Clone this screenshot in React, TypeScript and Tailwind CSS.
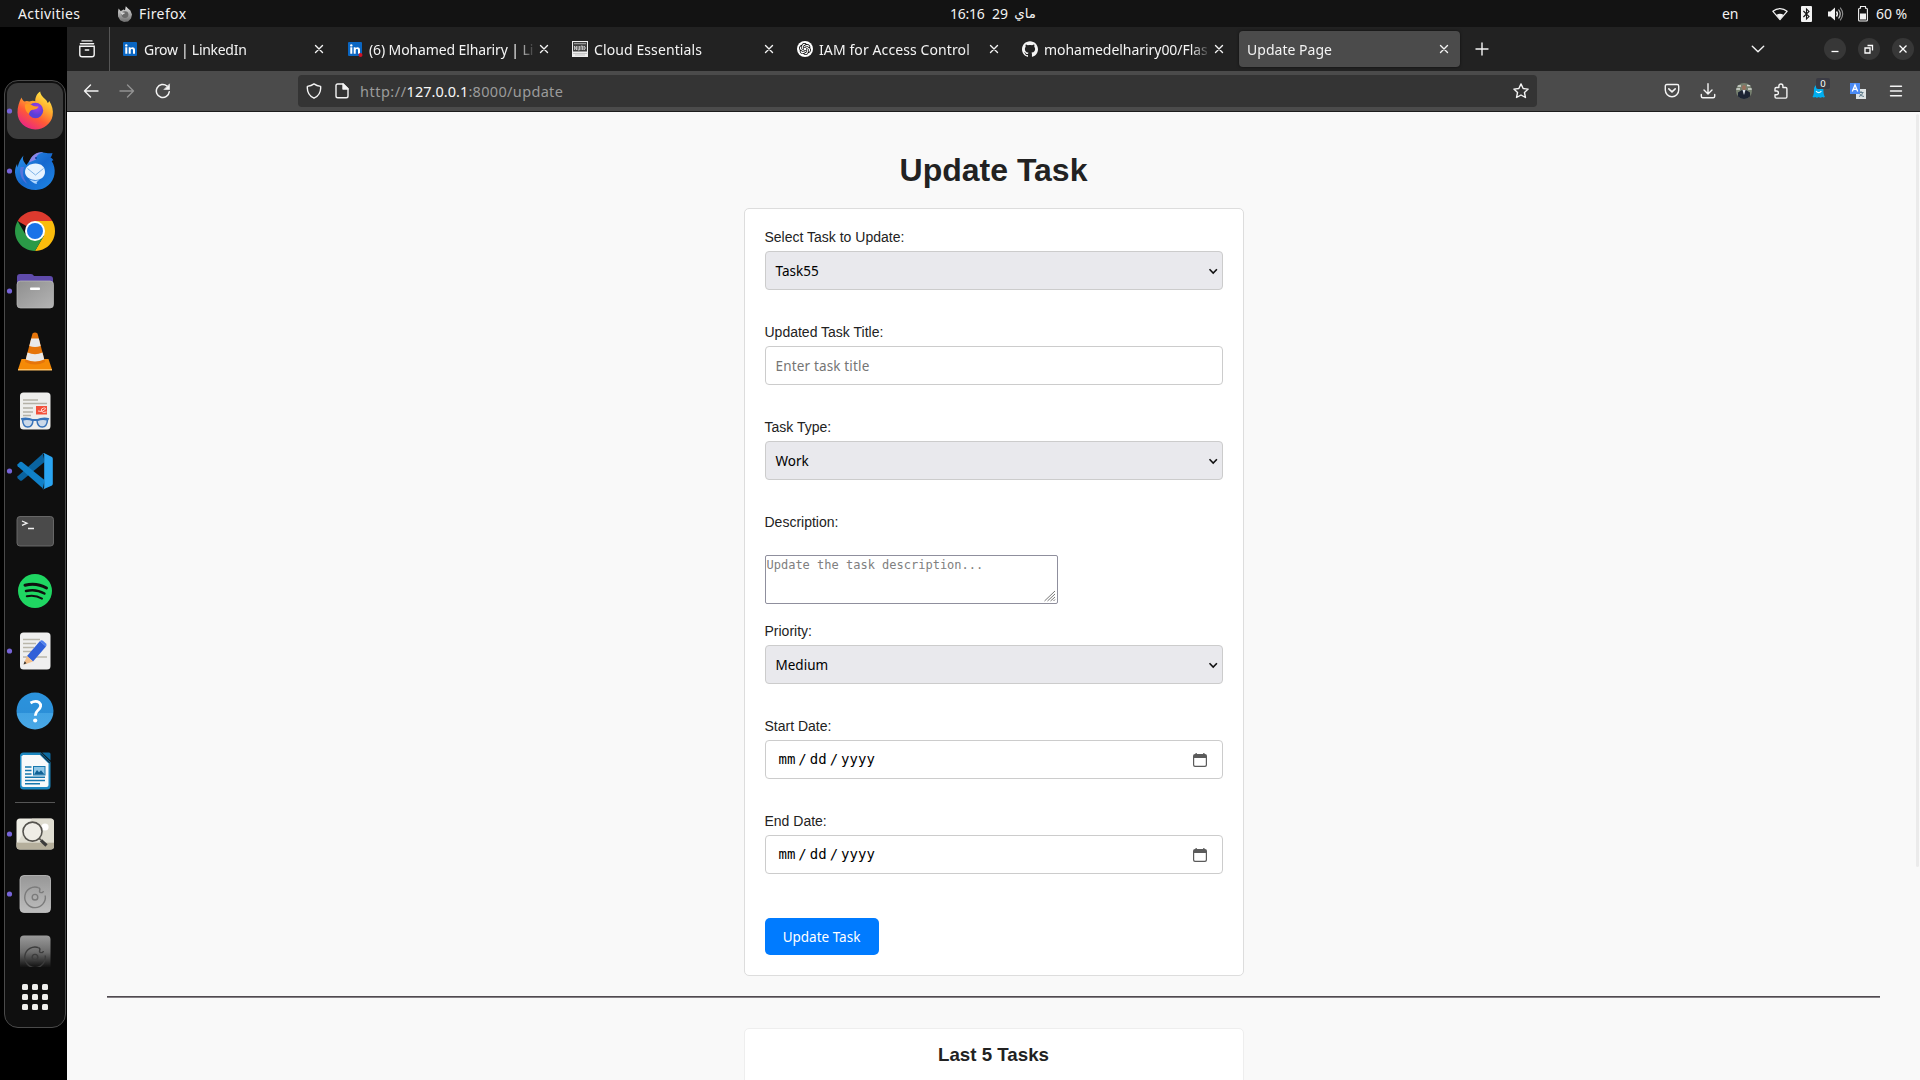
import type { ReactNode } from "react";
import { SiGithub, SiOpenai } from "react-icons/si";

type SvgProps = { children: ReactNode; size?: number; className?: string };

function Line({ children, size = 16, className = "" }: SvgProps) {
  return (
    <svg
      width={size}
      height={size}
      viewBox={`0 0 ${size} ${size}`}
      fill="none"
      stroke="currentColor"
      strokeWidth="1.4"
      strokeLinecap="round"
      strokeLinejoin="round"
      className={`shrink-0 ${className}`}
    >
      {children}
    </svg>
  );
}

/* ---------- System bar ---------- */

function TopBar() {
  return (
    <header className="flex h-[27px] shrink-0 items-center bg-[#131313] text-[14px] leading-[27px] text-[#f2f2f2]">
      <span className="ml-[18px] w-[99px] tracking-[0.41px]">Activities</span>
      <svg width="16" height="18" viewBox="0 0 16 18" className="shrink-0">
        <defs>
          <linearGradient id="mono" x1="0" y1="0" x2="0" y2="1">
            <stop offset="0" stopColor="#e2e2e2" />
            <stop offset="1" stopColor="#6d6d6d" />
          </linearGradient>
        </defs>
        <path d="M1.6 3.6 3.6 6 5 5.6 6.4 4.6 8 5.2 8.8 1.2 11 3.6 13.4 5.4 15 9.4 14 13.6 11 16.4 7 17 3.2 15.2 1 11.6 1 7Z" fill="url(#mono)" />
        <circle cx="8" cy="9.6" r="3.4" fill="#6a6a6a" />
        <path d="M3.4 7.6c2-.8 3 .2 4.6.1-.6 1.6-2.4 1.2-2.4 2.6z" fill="#d5d5d5" />
      </svg>
      <span className="ml-[6px] w-[811px] tracking-[0.4px]">Firefox</span>
      <span className="w-[42px] pb-px tracking-[-0.25px]">16:16</span>
      <span className="w-[22px] pb-px">29</span>
      <span dir="rtl" className="w-[22px] whitespace-nowrap pb-px text-[13.4px]">ماي</span>
      <span className="ml-[686px] w-[50px] tracking-[-0.2px]">en</span>
      <svg width="16" height="14" viewBox="0 0 16 14" className="shrink-0">
        <path d="M.9 4.3C5 .6 11 .6 15.1 4.3L8 12.6Z" fill="none" stroke="#f2f2f2" strokeWidth="1.2" strokeLinejoin="round" />
        <path d="M4.5 7.8Q8 5.6 11.5 7.8L8 12.4Z" fill="#f2f2f2" />
      </svg>
      <svg width="11" height="16" viewBox="0 0 11 16" className="ml-[13px] shrink-0">
        <rect width="11" height="16" rx="1" fill="#f2f2f2" />
        <path d="M2.4 5 8 10.6 5.5 13V3L8 5.4 2.4 11" fill="none" stroke="#131313" strokeWidth="1.1" />
      </svg>
      <svg width="16" height="16" viewBox="0 0 16 16" className="ml-[16px] shrink-0" fill="none" stroke="#f2f2f2">
        <path d="M0 5.5h2.5L7 1.5v13L2.5 10.5H0Z" fill="#f2f2f2" stroke="none" />
        <path d="M8.5 5.5q1.8 2.500 0 5" strokeWidth="1.4" />
        <path d="M10.5 3.5q3.4 4.500 0 9" strokeWidth="1.2" opacity=".8" />
        <path d="M12.2 1.700q5 6.300 0 12.600" strokeWidth="1.100" opacity=".55" />
      </svg>
      <svg width="10" height="16" viewBox="0 0 10 16" className="ml-[14px] shrink-0">
        <path d="M2.5.5h5v1.800h.9q1 0 1 1v10.700q0 1-1 1H1.600q-1 0-1-1V3.300q0-1 1-1h.9z" fill="none" stroke="#f2f2f2" strokeWidth="1.1" />
        <rect x="2" y="7.5" width="6" height="6" fill="#f2f2f2" />
      </svg>
      <span className="ml-[8px] whitespace-nowrap tracking-[-0.07px]">60 %</span>
    </header>
  );
}

/* ---------- Dock ---------- */

function DockItem({ children, running = false }: { children: ReactNode; running?: boolean }) {
  return (
    <svg width="60" height="60" viewBox="0 0 60 60" className="block shrink-0">
      {children}
      {running && <circle cx="4.5" cy="30" r="2.6" fill="#7764d8" />}
    </svg>
  );
}

function Drive({ faded = false }: { faded?: boolean }) {
  return (
    <>
      <defs>
        <linearGradient id={faded ? "driveFade" : "driveFull"} x1="0" y1="0" x2="0" y2="1">
          <stop offset="0" stopColor={faded ? "#9a9a9a" : "#979797"} />
          <stop offset={faded ? "0.45" : "1"} stopColor={faded ? "#6c6c6c" : "#bdbdbd"} />
          {faded && <stop offset="0.83" stopColor="#161616" />}
          {faded && <stop offset="1" stopColor="#0f0f0f" />}
        </linearGradient>
      </defs>
      <rect x="15" y="11.5" width="30.5" height="37" rx="4" fill={faded ? "url(#driveFade)" : "url(#driveFull)"} stroke={faded ? "none" : "#c4c4c4"} strokeWidth=".8" />
      <g fill="none" stroke={faded ? "#3c3c3c" : "#7b7b7b"} strokeWidth="1.4">
        <path d="M33.500 23.600A10.300 10.300 0 1 0 40.200 31.500" />
        <path d="M33.500 23.600q2 1 1.200 2.800t1.300 2.200 2.400-1.600" />
        <circle cx="30" cy="33.2" r="2.800" />
      </g>
    </>
  );
}

function Dock() {
  return (
    <aside className="flex w-[67px] shrink-0 flex-col bg-black pl-1 pt-[53px]">
      <div className="flex h-[948px] w-[62px] flex-col rounded-[14px] border border-[#4a4a4a] bg-[#0f0f0f]">
        {/* Firefox */}
        <DockItem running>
          <defs>
            <linearGradient id="ffFlame" x1=".85" y1="0" x2=".25" y2="1">
              <stop offset="0" stopColor="#fff44f" />
              <stop offset=".35" stopColor="#ffb02e" />
              <stop offset=".65" stopColor="#ff5a36" />
              <stop offset="1" stopColor="#e8218a" />
            </linearGradient>
            <radialGradient id="ffGlobe" cx=".6" cy=".3">
              <stop offset="0" stopColor="#a63be8" />
              <stop offset="1" stopColor="#5a3fd8" />
            </radialGradient>
          </defs>
          <rect x="2" y="2" width="56" height="56" rx="11" fill="#3b3b3b" />
          <path d="M16.5 16.5c.5 2 1.500 3 2.800 3.900 1.700-.7 3.400-.7 5 0 2.500-1 4.500-.9 6-.2-.2-3.800 1.800-7.700 4.900-9.600.5 4 2.700 5.400 5.300 7.800 1.200 1 1.800 2.300 2.300 3.600.8-.4 1.200-1.200 1.300-2.200 3 4.500 4.500 9.800 3.500 15-1.500 8-8.800 13.700-17.400 13.700-9.700 0-17.700-7.300-17.700-16.900 0-5.800 1.700-11 4-15.100z" fill="url(#ffFlame)" />
          <circle cx="30.5" cy="29.5" r="7.700" fill="url(#ffGlobe)" />
          <path d="M20 23.500c3-1.800 6-.3 8 1.300 2 1 4 .5 5.500.7-1 2.700-3.500 3-6 3.300-2 .3-3.200 2-3.500 4.200-2.500-1.500-4.600-5.500-4-9.500z" fill="#ff9a22" />
        </DockItem>
        {/* Thunderbird */}
        <DockItem running>
          <defs>
            <linearGradient id="tbBody" x1="0" y1="0" x2="1" y2="1">
              <stop offset="0" stopColor="#2d95ee" />
              <stop offset=".5" stopColor="#1669cf" />
              <stop offset="1" stopColor="#1d86e4" />
            </linearGradient>
          </defs>
          <path d="M18.5 14.5c-1.500 4 .5 6.500 3 9.500L25 19c3.500-6 8.500-8 13-7.600 3 .2 5.500 1.400 9.500.6-.5 2.500-1 3.500-2 4.500 1.500.6 2.200 1.500 3 2.800-.7.2-1.200.5-1.800.8 2.500 4 3.500 8 2.800 13C48.200 42 40.500 49 31 49 19 49 10.500 41.500 10 31.500c-.1-3 .7-6 2-8.500l.6 3.500c1-5 3.200-9 5.900-12z" fill="url(#tbBody)" />
          <path d="M24 21.500c2.500-7.500 8-10.500 14-10.100-5 1.200-7 3.500-7 7z" fill="#8c85e6" />
          <path d="M15.500 26c-1.500 8 2 14 7 17-3.500-5-6-9.500-3.500-17z" fill="#6d73dd" opacity=".7" />
          <path d="M20 31c0-5 4.500-8.500 10.500-8.500S40 26 40 31s-4.500 8-9.500 8S20 36 20 31z" fill="#e6f3ff" />
          <path d="M24 38c3 2 7 2 10 1-2 2-3 2.300-2 4-3-.4-6-2.400-8-5z" fill="#afd7ff" />
          <path d="m22.500 27.500 8 6.500 8-6.500" fill="none" stroke="#7fb4e8" strokeWidth="1" />
          <circle cx="31" cy="17" r="1" fill="#0b3f9a" />
        </DockItem>
        {/* Chrome */}
        <DockItem>
          <path d="M30 30 12.680 20A20 20 0 0 1 47.320 20Z" fill="#dd3a2e" />
          <path d="M30 20h17.320A20 20 0 0 1 30 50L38.660 35Z" fill="#fbbc0c" />
          <path d="M12.680 20A20 20 0 0 0 30 50L38.660 35 21.340 35Z" fill="#2a9a47" />
          <circle cx="30" cy="30" r="10" fill="#fff" />
          <circle cx="30" cy="30" r="8" fill="#1a73e8" />
        </DockItem>
        {/* Files */}
        <DockItem running>
          <defs>
            <linearGradient id="folder" x1="0" y1="0" x2="1" y2="1">
              <stop offset="0" stopColor="#8f8f8f" />
              <stop offset="1" stopColor="#b4b4b4" />
            </linearGradient>
          </defs>
          <path d="M12 16q0-3 3-3h11q2 0 3 2h16q3 0 3 3v10H12z" fill="#5f4bab" />
          <rect x="12" y="20" width="36.5" height="27" rx="3.5" fill="url(#folder)" stroke="#bdbdbd" strokeWidth=".7" />
          <rect x="25" y="26.5" width="10" height="2.600" rx=".8" fill="#fff" />
        </DockItem>
        {/* VLC */}
        <DockItem>
          <path d="m16.500 38-3.500 10.500h34L43.500 38z" fill="#f58a07" />
          <path d="M13 48h34v1.500H13z" fill="#ffc061" />
          <path d="M27.500 12.500q2.500-1.800 5 0L40 41q-10 5-20 0z" fill="#e6750a" />
          <path d="M26.200 17.500h7.600L35.700 25q-5.700 2.200-11.400 0z" fill="#e9e9e9" />
          <path d="M22.500 31.500q7.500 3.300 15 0l1.700 7q-9.200 4-18.400 0z" fill="#e9e9e9" />
        </DockItem>
        {/* Document viewer */}
        <DockItem>
          <rect x="15" y="11.5" width="30.5" height="37" rx="3.5" fill="#eeeeec" />
          <path d="M18 19h15M18 22.500h24M18 27h10M18 31h10M18 34.500h8" stroke="#b4b1a6" strokeWidth="1.500" />
          <rect x="31" y="25" width="11" height="8.500" fill="#f2503b" />
          <path d="M33 30q4 1.500 6.500-1t-1-2q-3 .5-2 3t5 1" fill="none" stroke="#ffd4cd" strokeWidth="1" />
          <path d="M16 38q6-1.500 12 1h4q6-2.500 12-1" fill="none" stroke="#3672b9" strokeWidth="1.800" />
          <g fill="#cbd9e9" stroke="#3672b9" strokeWidth="1.500">
            <path d="M17.500 39q5-1.500 10.500 0.500-.5 6.500-5.200 6.500t-5.300-7z" />
            <path d="M42.500 39q-5-1.500-10.500 0.500.5 6.500 5.200 6.500t5.300-7z" />
          </g>
        </DockItem>
        {/* Visual Studio Code */}
        <DockItem running>
          <path d="m38 12.500 1.500 8.500L17 39.500q-1 .6-2 0L12.700 37.300q-.9-1 0-2z" fill="#0a639f" />
          <path d="m38 47.500 1.500-8.500L17 21q-1-.6-2 0l-2.300 2.200q-.9 1 0 2z" fill="#1081c9" />
          <path d="M37 12.500q.8-.9 2-.4l7.500 3.700q1.300.7 1.300 2v25q0 1.300-1.300 2L39 48q-1.200.5-2-.4 2.200 1.100 2.200-1.600V14q0-2.500-2.200-1.500z" fill="#2aa5f2" />
        </DockItem>
        {/* Terminal */}
        <DockItem>
          <rect x="12" y="15.5" width="36.5" height="29.5" rx="3" fill="#4a4a4a" stroke="#6e6e6e" strokeWidth=".9" />
          <path d="m17 20 5 2.200-5 2.200M23 27.500h6" fill="none" stroke="#f2f2f2" strokeWidth="1.300" />
        </DockItem>
        {/* Spotify */}
        <DockItem>
          <circle cx="30" cy="30" r="17" fill="#1fd662" />
          <g fill="none" stroke="#0f0f0f" strokeLinecap="round">
            <path d="M20 24.200q11.500-3 21.500 2.800" strokeWidth="3" />
            <path d="M21 30q9.800-2.500 18.400 2.500" strokeWidth="2.500" />
            <path d="M21.800 35.300q8.200-1.800 15.200 2.300" strokeWidth="2" />
          </g>
        </DockItem>
        {/* Text editor */}
        <DockItem running>
          <rect x="15" y="11.5" width="30.5" height="37" rx="3.5" fill="#efefef" />
          <path d="M18 18.500h17M18 22.500h13M18 26.500h11M18 30.500h9M18 36h24" stroke="#b9b6aa" strokeWidth="1.400" />
          <path d="m35 20 6 5.500L28 40.500 22 35z" fill="#3060d8" />
          <path d="M35 20q1.500-1.500 3-.2l3 2.700q1.300 1.400 0 3z" fill="#4f80ef" />
          <path d="m22 35 6 5.500-8.500 3q-1-.5-.5-1.500z" fill="#f3c08c" />
          <path d="m19.700 40.200 1.800 2.100-3 1.200z" fill="#333" />
        </DockItem>
        {/* Help */}
        <DockItem>
          <defs>
            <linearGradient id="help" x1="0" y1="0" x2="0" y2="1">
              <stop offset="0" stopColor="#2b93dd" />
              <stop offset=".54" stopColor="#2b8fd8" />
              <stop offset=".56" stopColor="#42a3e4" />
              <stop offset="1" stopColor="#49a8e6" />
            </linearGradient>
          </defs>
          <circle cx="30" cy="30" r="18.500" fill="url(#help)" />
          <path d="M25.500 22q5-3 8.500-.6c3 2.500 1.500 5.600-.5 7.400-2 1.800-3.200 2.500-3.200 6" fill="none" stroke="#fff" strokeWidth="2.800" />
          <circle cx="30.2" cy="39.5" r="2.100" fill="#fff" />
        </DockItem>
        {/* Writer */}
        <DockItem>
          <path d="M18.500 11.500H36l9.500 9.500v24q0 3.500-3.500 3.500H18.500q-3.500 0-3.500-3.500V15q0-3.500 3.500-3.500z" fill="#1c87c0" />
          <path d="M18 14h17l8.500 8.500V44q0 2-2 2H18.500q-2 0-2-2V15.500z" fill="#f7f9fa" />
          <path d="M37 11.500h7q1.500 0 1.500 1.500v6.500z" fill="#0f6da3" />
          <path d="M35.500 12.500 45 22" stroke="#0b3954" strokeWidth="1.500" />
          <path d="M20 26h6.500M20 29.500h6.500M20 33h6.500M20 36.300h20M20 39.500h20M20 42.700h15" stroke="#1678ae" strokeWidth="1.500" />
          <rect x="28.5" y="25.5" width="11.5" height="8.500" fill="#8fc6e6" stroke="#1678ae" />
          <path d="m29 33.500 3-4.500 2 2.200 2-2 3.500 4.300z" fill="#0f6194" />
        </DockItem>
        <div className="mx-[10px] my-px h-px bg-[#555]" />
        {/* Image viewer */}
        <DockItem running>
          <rect x="11.5" y="14.5" width="37.5" height="31" rx="3.5" fill="#efeee6" />
          <path d="M27 14.500h18.500q3.500 0 3.500 3.500V38H13z" fill="#d8d5c8" opacity=".7" />
          <path d="M11.500 38.500H49V42q0 3.500-3.500 3.500H15q-3.500 0-3.500-3.500z" fill="#b5af9c" />
          <circle cx="40" cy="23" r="3.600" fill="#fff" />
          <circle cx="27.5" cy="27.6" r="9.500" fill="#f5f4ef" fillOpacity=".7" stroke="#55534e" strokeWidth="1.600" />
          <path d="m34.300 34.500 1.800 1.700" stroke="#55534e" strokeWidth="1.600" />
          <path d="m36 36.300 5.500 5.200" stroke="#3b3b3b" strokeWidth="3.200" />
        </DockItem>
        {/* Mounted drives */}
        <DockItem running>
          <Drive />
        </DockItem>
        <div className="h-[43px] shrink-0 overflow-hidden">
          <DockItem>
            <Drive faded />
          </DockItem>
        </div>
        {/* Application launcher */}
        <div className="mx-auto mt-[17px] grid grid-cols-3 gap-[4.5px]">
          {Array.from({ length: 9 }, (_, i) => (
            <span key={i} className="size-[5.5px] rounded-[1.5px] bg-[#eeeeec]" />
          ))}
        </div>
      </div>
    </aside>
  );
}

/* ---------- Browser chrome ---------- */

function LinkedIn({ alert = false }: { alert?: boolean }) {
  return (
    <svg width="16" height="16" viewBox="0 0 16 16" className="shrink-0">
      <rect x="1" y="1" width="14" height="14" rx="1" fill="#0a66c2" />
      <circle cx="4.3" cy="4.4" r="1.200" fill="#fff" />
      <path d="M3.300 6.300h2v6.400h-2zM6.700 6.300h1.900v.9c1-1.600 4.400-1.400 4.400 1.600v3.900h-2V9.300c0-2-2.300-1.700-2.300 0v3.400h-2z" fill="#fff" />
      {alert && <circle cx="13.500" cy="14" r="2" fill="#d11124" />}
    </svg>
  );
}

function AmiFavicon() {
  return (
    <svg width="16" height="16" viewBox="0 0 16 16" className="shrink-0">
      <rect width="16" height="16" fill="#eee" />
      <rect x="1" y="1" width="14" height="9.500" fill="#3d3d3d" />
      <path d="M2 2.700h12" stroke="#aaa" />
      <path d="M2.500 9V5l2 4V5M6 5v4h1.500V5M9 9V5h1.500v4M12 5v4l1.500-2L12 5" stroke="#d5d5d5" strokeWidth=".8" fill="none" />
      <path d="M1 12.500h14M3 14h10" stroke="#bdbdbd" strokeWidth=".8" />
    </svg>
  );
}

function ChatFavicon() {
  return (
    <span className="flex size-4 shrink-0 items-center justify-center rounded-full bg-white text-black">
      <SiOpenai size={12} />
    </span>
  );
}

type TabProps = { title: string; icon?: ReactNode; active?: boolean; tracking: string };

function Tab({ title, icon, active, tracking }: TabProps) {
  return (
    <div className="h-full w-[225px] shrink-0 px-[2px] py-1">
      <div className={`flex h-full items-center rounded-[4px] px-2 ${active ? "bg-[#4b4b4b] shadow-[0_0_3px_rgba(0,0,0,0.6)]" : ""}`}>
        {icon}
        <span
          className={`flex-1 overflow-hidden whitespace-nowrap [mask-image:linear-gradient(to_right,#000_calc(100%-20px),transparent)] ${icon ? "pl-[6px]" : ""} ${tracking}`}
        >
          {title}
        </span>
        <Line>
          <path d="m4.500 4.500 7 7m0-7-7 7" />
        </Line>
      </div>
    </div>
  );
}

function TabStrip() {
  return (
    <div className="flex h-11 shrink-0 items-center bg-[#222222] text-[14px] text-[#f4f4f4]">
      <div className="mr-[2px] flex h-full w-[43px] shrink-0 items-center border-r border-[#555] pl-[12px]">
        <svg width="16" height="18" viewBox="0 0 16 18" fill="none" stroke="#f4f4f4" strokeWidth="1.4" strokeLinecap="round">
          <path d="M3 .9h10M1.400 3.700h13.200" />
          <path d="M.8 6.300h14.400v8.200q0 2.300-2.300 2.300H3.100q-2.300 0-2.300-2.300z" />
          <path d="M6.300 10h3.400" />
        </svg>
      </div>
      <Tab icon={<LinkedIn />} title="Grow | LinkedIn" tracking="tracking-[-0.29px]" />
      <Tab icon={<LinkedIn alert />} title="(6) Mohamed Elhariry | Li" tracking="tracking-[-0.12px]" />
      <Tab icon={<AmiFavicon />} title="Cloud Essentials" tracking="tracking-[0.1px]" />
      <Tab icon={<ChatFavicon />} title="IAM for Access Control" tracking="tracking-[0.1px]" />
      <Tab icon={<SiGithub size={16} className="shrink-0" />} title="mohamedelhariry00/Flas" tracking="tracking-[-0.04px]" />
      <Tab active title="Update Page" tracking="tracking-[0.02px]" />
      <Line className="ml-[12px]">
        <path d="M8 2v12M2 8h12" />
      </Line>
      <Line className="ml-[260px]">
        <path d="m2.300 5.300 5.700 5.400 5.700-5.400" />
      </Line>
      <div className="ml-[58px] flex gap-3">
        {["M5 11h7", "M4.500 7.500h5v5h-5zM7 5h5v5", "m5 5 7 7m0-7-7 7"].map((d) => (
          <span key={d} className="flex size-[22px] items-center justify-center rounded-full bg-[#373737]">
            <svg width="16" height="16" viewBox="0.5 0.5 16 16" fill="none" stroke="#fff" strokeWidth="1.3">
              <path d={d} />
            </svg>
          </span>
        ))}
      </div>
    </div>
  );
}

function Toolbar() {
  return (
    <div className="flex h-[41px] shrink-0 items-center border-b border-[#1c1c1c] bg-[#4b4b4b] pl-[6px] text-[#f4f4f4]">
      <div className="flex w-9 justify-center">
        <Line>
          <path d="M15 8H1.500m6-6-6 6 6 6" />
        </Line>
      </div>
      <div className="flex w-9 justify-center text-[#929292]">
        <Line>
          <path d="M1 8h13.500m-6-6 6 6-6 6" />
        </Line>
      </div>
      <div className="flex w-9 justify-center">
        <Line>
          <path d="M14.300 8.700A6.500 6.500 0 1 1 12 3" strokeWidth="1.500" />
          <path d="M14.500 1.200v5.300H9.200z" fill="currentColor" strokeWidth=".6" />
        </Line>
      </div>
      <div className="ml-[117px] flex h-8 w-[1239px] shrink-0 items-center rounded-[4px] bg-[#343434] pl-2">
        <Line>
          <path d="M8 .9c2 1.600 4.200 2.300 6.600 2.500.5 5-1.800 9.600-6.600 11.800C3.200 13 .9 8.400 1.400 3.400 3.800 3.200 6 2.500 8 .9z" />
        </Line>
        <Line className="ml-3">
          <path d="M3.600 1h5.600L14 5.800V13q0 1.800-1.800 1.800H3.800Q2 14.800 2 13V2.600Q2 1 3.600 1z" />
          <path d="M9 1v5h5z" fill="currentColor" />
        </Line>
        <span className="ml-[10px] flex-1 whitespace-nowrap pt-[2px] text-[14.5px] text-[#9b9b9b]">
          <span className="tracking-[0.5px]">http://</span>
          <span className="tracking-[0.05px] text-[#f8f8f8]">127.0.0.1</span>
          <span className="tracking-[0.33px]">:8000/update</span>
        </span>
        <Line className="mr-2">
          <path d="m8 .9 2.150 4.600 5 .6-3.700 3.400 1 5L8 12l-4.450 2.500 1-5L.85 6.100l5-.6z" />
        </Line>
      </div>
      <div className="ml-[117px] flex w-9 justify-center">
        <Line>
          <path d="M2.800 1.500h10.400q1.500 0 1.500 1.500v4a6.700 6.700 0 0 1-13.400 0V3q0-1.500 1.500-1.500z" />
          <path d="m4.800 5.800 3.200 3 3.200-3" strokeWidth="1.600" />
        </Line>
      </div>
      <div className="flex w-9 justify-center">
        <Line>
          <path d="M8 .8v10M4 7l4 4 4-4M1.300 11.500v1.700q0 1.500 1.500 1.500h10.400q1.500 0 1.500-1.500v-1.700" />
        </Line>
      </div>
      <div className="flex w-9 justify-center">
        <svg width="16" height="16" viewBox="0 0 16 16" className="rounded-full">
          <rect width="16" height="16" fill="#76806f" />
          <path d="M0 3h5M11 2.500h5M0 6h4M12 6h4" stroke="#d7dcd8" strokeWidth="1.600" />
          <path d="M2 16V9.500L6 7h4l4 2.500V16z" fill="#1d2433" />
          <path d="m6.500 7 1.500 5 1.500-5z" fill="#dfe5ec" />
          <ellipse cx="8" cy="4.5" rx="2" ry="2.600" fill="#9a6f5c" />
        </svg>
      </div>
      <div className="flex w-[37px] justify-center">
        <Line>
          <path d="M2 8V5.800q0-1.300 1.300-1.300h2.600V3a2 2 0 0 1 4 0v1.500h2.700q1.300 0 1.300 1.300v8q0 1.300-1.300 1.300H3.300q-1.300 0-1.300-1.300v-2h1.500a1.900 1.900 0 0 0 0-3.800z" />
        </Line>
      </div>
      <div className="relative flex w-[39px] justify-center">
        <svg width="16" height="16" viewBox="0 0 16 16">
          <path d="M3 6a4.700 4.700 0 0 1 9.400 0c0 4 .3 6 1.600 8-1 .5-1.800.7-2.800 0-1.200.9-2.300.9-3.500 0-1.200.9-2.300.9-3.500 0-1 .7-1.600.5-2.700 0C2.700 12 3 10 3 6z" fill="#00aef0" />
          <path d="M5 8.200q2.700 3 5.400 0" fill="none" stroke="#e5f8ff" strokeWidth="1.200" />
        </svg>
        <span className="absolute left-[17px] top-[-5px] h-[11px] w-[14px] rounded-[2px] bg-[#3b3b44] text-center text-[9.5px] leading-[11px] text-white">0</span>
      </div>
      <div className="flex w-[39px] justify-center">
        <svg width="16" height="16" viewBox="0 0 16 16" className="overflow-visible">
          <rect x="6" y="6" width="10" height="10" fill="#dde2e4" />
          <path d="M8.500 9.500h5M11 8v1.500M9 13.500q3.500-1 3.700-4M9.500 10.500q1.500 3 4.500 3" stroke="#607d8b" fill="none" />
          <rect width="10" height="11" fill="#4a8af4" />
          <path d="M2.300 8.500 5 2l2.700 6.500M3.200 6.300h3.600" stroke="#fff" strokeWidth="1.300" fill="none" />
        </svg>
      </div>
      <div className="flex w-[38px] justify-center">
        <Line>
          <path d="M2.500 3.300h11M2.500 8h11M2.500 12.700h11" />
        </Line>
      </div>
    </div>
  );
}

/* ---------- Page ---------- */

function Field({ label, children }: { label: string; children: ReactNode }) {
  return (
    <div className="mb-[34px]">
      <div className="mb-[6px] text-sm leading-4">{label}</div>
      {children}
    </div>
  );
}

function Select({ value }: { value: string }) {
  return (
    <div className="flex h-[39px] items-center justify-between rounded-[4px] border border-[#ccc] bg-[#e9e9ed] pl-[10px] pr-[4px] pt-px font-['Noto_Sans',sans-serif] text-[13.5px] text-black">
      {value}
      <svg width="10" height="7" viewBox="0 0 10 7" fill="none" stroke="#111" strokeWidth="1.6">
        <path d="M1.500 1.200 5.200 5 8.900 1.200" />
      </svg>
    </div>
  );
}

function DateInput() {
  return (
    <div className="flex h-[39px] items-center rounded-[4px] border border-[#ccc] bg-white pl-[13px] pr-[15px] font-['DejaVu_Sans_Mono',monospace] text-sm text-black">
      <span className="flex-1 whitespace-nowrap pb-px">
        mm<span className="mx-[3px]">/</span>dd<span className="mx-[3px]">/</span>yyyy
      </span>
      <svg width="14" height="14" viewBox="0 0 14 14">
        <path d="M2.500 0h1.300v1h6.400V0h1.300v1h.5q2 0 2 2v9q0 2-2 2H2q-2 0-2-2V3q0-2 2-2h.5zM1.200 5v6.800q0 1 1 1h9.600q1 0 1-1V5z" fill="#5b5b5b" fillRule="evenodd" />
      </svg>
    </div>
  );
}

function Page() {
  return (
    <main className="relative flex flex-1 flex-col items-center overflow-hidden bg-[#f9f9f9] pt-10 font-['Liberation_Sans',Arial,sans-serif] text-[#222]">
      <h1 className="text-[32px] font-bold leading-9">Update Task</h1>
      <section className="mt-5 h-[768px] w-[500px] shrink-0 rounded-[5px] border border-[#ddd] bg-white p-5">
        <Field label="Select Task to Update:">
          <Select value="Task55" />
        </Field>
        <Field label="Updated Task Title:">
          <div className="flex h-[39px] items-center rounded-[4px] border border-[#ccc] pl-[10px] pt-px font-['Noto_Sans',sans-serif] text-[13.5px] tracking-[0.16px] text-[#757575]">
            Enter task title
          </div>
        </Field>
        <Field label="Task Type:">
          <Select value="Work" />
        </Field>
        <div className="text-sm leading-4">Description:</div>
        <div className="mb-[19px] mt-[25px] flex h-[49px] w-[293px] justify-between rounded-[2px] border border-[#8f8f9d] pl-px font-['DejaVu_Sans_Mono',monospace] text-[12px] leading-[18px] text-[#808080]">
          Update the task description...
          <svg width="12" height="12" viewBox="0 0 12 12" className="mb-px mr-px self-end" stroke="#777" strokeWidth="1">
            <path d="M.5 11 11 1M3.500 11 11 4M6.500 11 11 7M9.500 11 11 9.500" />
          </svg>
        </div>
        <Field label="Priority:">
          <Select value="Medium" />
        </Field>
        <Field label="Start Date:">
          <DateInput />
        </Field>
        <Field label="End Date:">
          <DateInput />
        </Field>
        <button className="mt-[44px] block h-[37px] w-[114px] rounded-[5px] bg-[#007bff] pt-px font-['Noto_Sans',sans-serif] text-[13.5px] text-white">
          Update Task
        </button>
      </section>
      <div className="mt-5 h-[2px] w-[1773px] shrink-0 border-b border-t border-b-[#858085] border-t-[#4f4a4f]" />
      <section className="mt-[30px] h-[200px] w-[500px] shrink-0 rounded-[5px] border border-[#eee] bg-white pt-[15px]">
        <h2 className="text-center text-[18.72px] font-bold leading-[22px]">Last 5 Tasks</h2>
      </section>
      <div className="absolute right-px top-[2px] h-[753px] w-[3px] rounded-full bg-[#ebebeb]" />
    </main>
  );
}

export default function App() {
  return (
    <div className="flex h-[1080px] w-[1920px] flex-col overflow-hidden font-['Noto_Sans','DejaVu_Sans',sans-serif]">
      <TopBar />
      <div className="flex min-h-0 flex-1">
        <Dock />
        <div className="flex min-w-0 flex-1 flex-col">
          <TabStrip />
          <Toolbar />
          <Page />
        </div>
      </div>
    </div>
  );
}
